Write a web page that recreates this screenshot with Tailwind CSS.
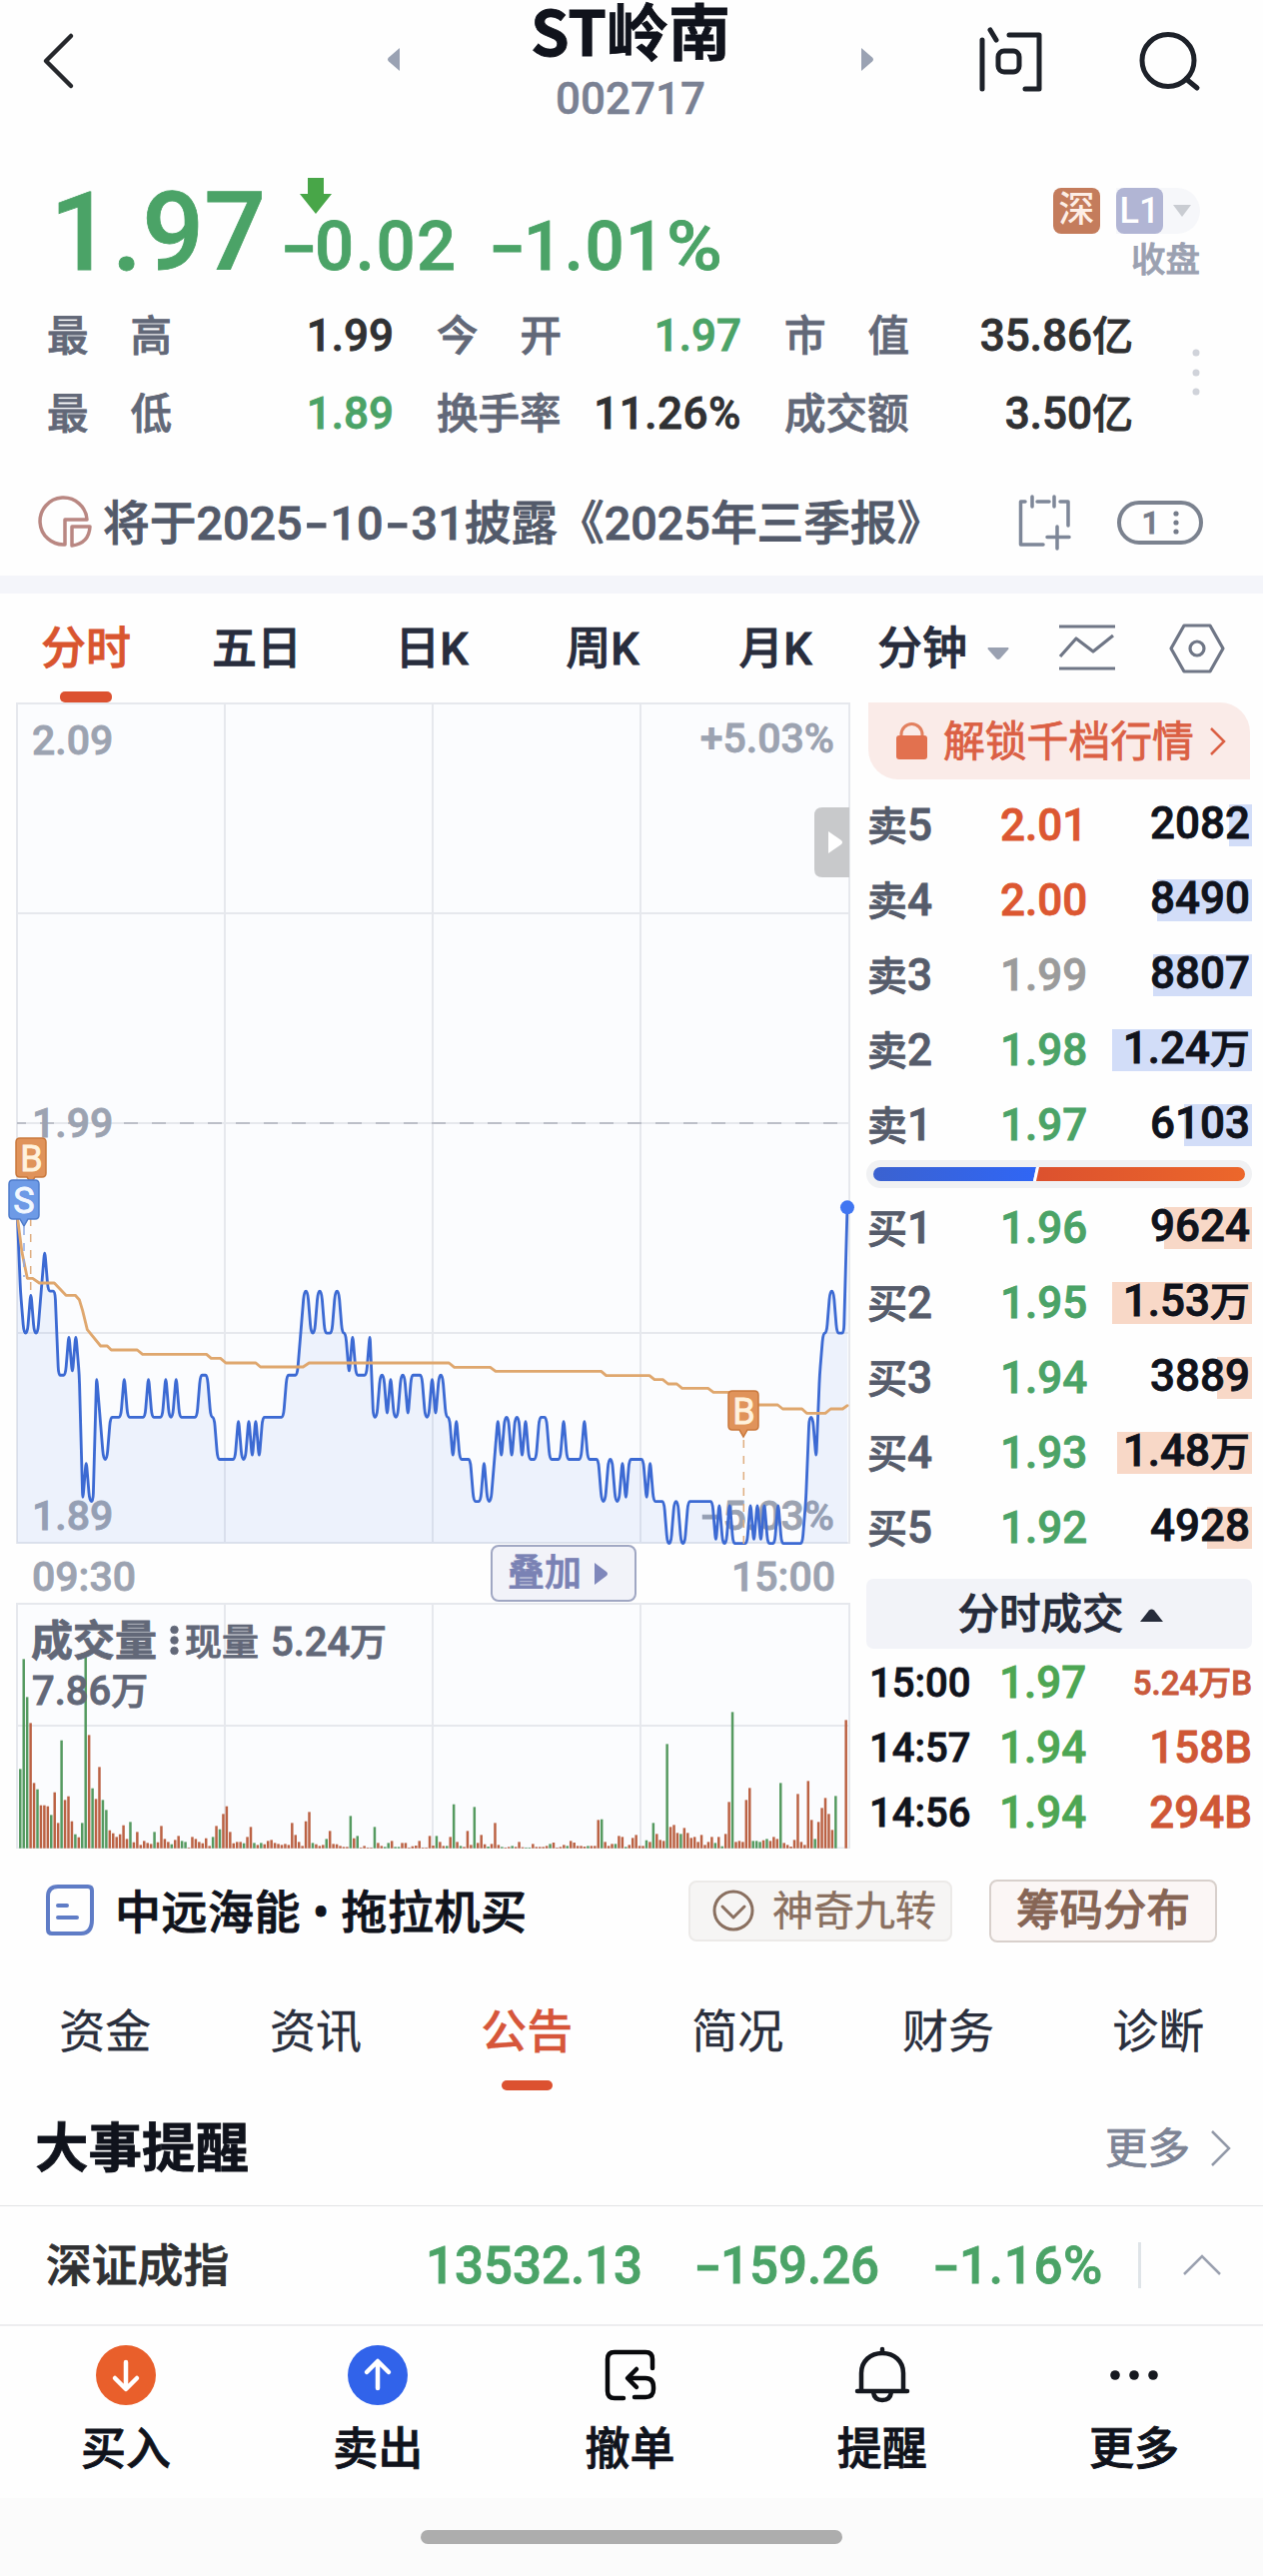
<!DOCTYPE html>
<html lang="zh-CN">
<head>
    <meta charset="UTF-8">
    <meta name="viewport" content="width=device-width, initial-scale=1.0">
    <title>ST岭南 002717</title>
    <script src="https://cdn.jsdelivr.net/npm/@tailwindcss/browser@4"></script>
</head>

<body class="w-[1264px] bg-[#fefefe] font-['Roboto','Noto_Sans_CJK_SC',sans-serif] font-medium text-[#10131c] leading-none overflow-x-hidden [-webkit-text-stroke-width:0.8px]">

  <!-- Header -->
  <header class="h-[150px] flex items-start">
    <svg class="ml-[40px] mt-[30px] w-[40px] h-[62px]" viewBox="0 0 40 62" fill="none" stroke="#26282c" stroke-width="4.5" stroke-linecap="round" stroke-linejoin="round"><path d="M31 6 6 31l25 25"/></svg>
    <svg class="ml-[308px] mt-[48px] w-[12px] h-[23px]" viewBox="0 0 12 23" fill="#9aa2b3"><path d="M12 0v23L1 13.5q-2-2 0-4z"/></svg>
    <div class="w-[462px] text-center">
      <h1 class="h-[60px] leading-[58px] text-[62px] font-bold font-['Noto_Sans_CJK_SC',sans-serif]">ST岭南</h1>
      <div class="mt-[17px] text-[44px] text-[#7a8193] [-webkit-text-stroke-width:0.4px]">002717</div>
    </div>
    <svg class="mt-[48px] w-[12px] h-[23px]" viewBox="0 0 12 23" fill="#9aa2b3"><path d="M0 0v23l11-9.500q2-2 0-4z"/></svg>
    <svg class="ml-[101px] mt-[24px] w-[72px] h-[72px]" viewBox="0 0 72 72" fill="none" stroke="#1d2129" stroke-width="5" stroke-linecap="round" stroke-linejoin="round">
      <path d="M8 16v49M16 6l6 10M35 11h30v54H51"/>
      <rect x="24" y="27" width="21" height="21" rx="6"/>
    </svg>
    <svg class="ml-[88px] mt-[28px] w-[70px] h-[68px]" viewBox="0 0 70 68" fill="none" stroke="#1d2129" stroke-width="5" stroke-linecap="round"><circle cx="34" cy="32.500" r="26"/><path d="m52 51 11 9"/></svg>
  </header>

  <!-- Price -->
  <section class="h-[147px] flex justify-between items-start">
    <div class="relative pt-[29px] pl-[50px] flex items-baseline text-[#4ba367]">
      <span class="w-[236px] text-[109px]">1.97</span>
      <span class="w-[208px] text-[69px] tracking-[1.500px] whitespace-nowrap"><span class="inline-block w-[29px] scale-x-150 text-center">-</span>0.02</span>
      <span class="text-[69px] tracking-[1.500px] whitespace-nowrap"><span class="inline-block w-[30px] scale-x-150 text-center">-</span>1.01<span class="inline-block scale-x-110 origin-left">%</span></span>
      <svg class="absolute left-[300px] top-[28px] w-[32px] h-[36px]" viewBox="0 0 32 36" fill="#48a648"><path d="M8 0h16v16h8L16 36 0 16h8z"/></svg>
    </div>
    <div class="mt-[38px] mr-[63px] flex flex-col items-end">
      <div class="flex items-center">
        <span class="w-[47px] h-[46px] leading-[45px] rounded-[8px] bg-[#c47c5c] text-center text-[36px] text-[#fdeee6] [-webkit-text-stroke-width:0px]">深</span>
        <span class="ml-[16px] flex items-center w-[84px] h-[46px] rounded-r-full rounded-l-[8px] bg-[#f6f7fa]">
          <span class="w-[47px] h-[46px] leading-[46px] rounded-[8px] bg-[#b1b5d4] text-center text-[36px] text-white [-webkit-text-stroke-width:0px]">L1</span>
          <svg class="ml-[10px] w-[18px] h-[12px]" viewBox="0 0 18 12" fill="#c9ccd2"><path d="M0 0h18L9 12z"/></svg>
        </span>
      </div>
      <span class="mt-[9px] text-[34.500px] text-[#9ba1b1]">收盘</span>
    </div>
  </section>

  <!-- Key figures -->
  <section class="relative h-[156px] pl-[47px] grid grid-cols-[347px_305px_349px] gap-x-[43px] grid-rows-2 text-[44px] text-[#303133] leading-[79px]">
    <div class="flex justify-between"><span class="w-[125px] flex justify-between text-[41.500px] text-[#626878]"><i class="not-italic">最</i><i class="not-italic">高</i></span><span>1.99</span></div>
    <div class="flex justify-between"><span class="w-[125px] flex justify-between text-[41.500px] text-[#626878]"><i class="not-italic">今</i><i class="not-italic">开</i></span><span class="text-[#4ba367]">1.97</span></div>
    <div class="flex justify-between"><span class="w-[125px] flex justify-between text-[41.500px] text-[#626878]"><i class="not-italic">市</i><i class="not-italic">值</i></span><span>35.86<b class="font-medium text-[41px]">亿</b></span></div>
    <div class="flex justify-between"><span class="w-[125px] flex justify-between text-[41.500px] text-[#626878]"><i class="not-italic">最</i><i class="not-italic">低</i></span><span class="text-[#4ba367]">1.89</span></div>
    <div class="flex justify-between"><span class="text-[41.500px] text-[#626878]">换手率</span><span class="tracking-[0.500px]">11.26%</span></div>
    <div class="flex justify-between"><span class="text-[41.500px] text-[#626878]">成交额</span><span>3.50<b class="font-medium text-[41px]">亿</b></span></div>
    <svg class="absolute left-[1193px] top-[52px] w-[8px] h-[48px]" viewBox="0 0 8 48" fill="#d0d3da"><circle cx="4" cy="4" r="3.500"/><circle cx="4" cy="24" r="3.500"/><circle cx="4" cy="43" r="3.500"/></svg>
  </section>

  <!-- Report notice -->
  <section class="mt-[17px] h-[106px] flex items-center">
    <svg class="ml-[38px] w-[56px] h-[56px]" viewBox="0 0 56 56" fill="none" stroke="#b98782" stroke-width="3.500" stroke-linejoin="round">
      <path d="M27 50A23.500 23.500 0 1 1 49 25H27z"/>
      <path d="M34 32h18q-1 17-18 19z"/>
    </svg>
    <p class="ml-[9px] pt-[2px] text-[46.700px] text-[#535a6a] whitespace-nowrap">将于2025<span class="inline-block w-[28px] scale-x-150 text-center">-</span>10<span class="inline-block w-[28px] scale-x-150 text-center">-</span>31披露《2025年三季报》</p>
    <svg class="absolute left-[1018px] w-[56px] h-[56px]" viewBox="0 0 56 56" fill="none" stroke="#7e8798" stroke-width="3.500" stroke-linecap="round" stroke-linejoin="round">
      <path d="M8 7H3.500v43H26M15 2v10M20 7h12M37 2v10M43 7h8v24M40 32v22M30 42.500h22"/>
    </svg>
    <div class="absolute left-[1118px] w-[86px] h-[44px] rounded-full border-[4px] border-[#7b828f] flex items-center justify-center gap-[13px] text-[32px] text-[#757c8a]">
      <span>1</span>
      <svg class="w-[6px] h-[24px]" viewBox="0 0 6 24" fill="#757c8a"><circle cx="3" cy="3" r="2.600"/><circle cx="3" cy="12" r="2.600"/><circle cx="3" cy="21" r="2.600"/></svg>
    </div>
  </section>

  <div class="h-[18px] bg-[#f4f5fa]"></div>

  <!-- Chart period tabs -->
  <nav class="h-[109px] flex text-[45px] leading-[111px] text-[#282d3d]">
    <div class="w-[172px] flex flex-col items-center text-[#d9552f]"><span class="h-[98px]">分时</span><i class="w-[52px] h-[11px] rounded-[5px] bg-[#dc5130]"></i></div>
    <span class="w-[170px] text-center">五日</span>
    <span class="w-[180px] text-center">日K</span>
    <span class="w-[162px] text-center">周K</span>
    <span class="w-[184px] text-center">月K</span>
    <span class="ml-[10px] w-[110px]">分钟</span>
    <svg class="mt-[54px] w-[22px] h-[12px]" viewBox="0 0 22 12" fill="#9aa1b1"><path d="M1 0h20q1 1 0 2l-8 9q-2 2-4 0L1 2q-1-1 0-2z"/></svg>
    <svg class="ml-[48px] mt-[30px] w-[60px] h-[48px]" viewBox="0 0 60 48" fill="none" stroke="#6f7686" stroke-width="3.200" stroke-linejoin="round"><path d="M2 3h56M2 45h56M3 33 19 15l17 13 20-16"/></svg>
    <svg class="ml-[52px] mt-[29px] w-[56px] h-[52px]" viewBox="0 0 56 52" fill="none" stroke="#6f7686" stroke-width="3.200" stroke-linejoin="round"><path d="M15 3h26l13 23-13 23H15L2 26z"/><circle cx="28" cy="26" r="7"/></svg>
  </nav>

  <main class="flex">
    <!-- Charts -->
    <div class="w-[867px]">
      <svg id="price-chart" class="block w-[867px] h-[842px] overflow-visible" viewBox="0 0 867 842">
        <rect x="17" y="1" width="833" height="841" fill="#fbfcfe"/>
        <path d="M16 1h835M17 211h833M17 421h833M17 631h833M17 841h833M17 1v841M225 1v841M433 1v841M641 1v841M850 1v841" stroke="#e6e8ed" stroke-width="2" fill="none"/>
        <path d="M17 421h833" stroke="#bcbfc8" stroke-width="2" stroke-dasharray="14 14" stroke-dashoffset="5"/>
        <g fill="#9ca3b1" stroke="#9ca3b1" stroke-width=".8" font-size="41">
          <text x="32" y="52">2.09</text>
          <text x="32" y="435">1.99</text>
          <text x="32" y="828">1.89</text>
          <text x="835" y="50" text-anchor="end">+5.03%</text>
          <text transform="translate(701 828) scale(1.500 1)">-</text>
          <text x="835" y="828" text-anchor="end">5.03%</text>
        </g>
        <g transform="translate(0 417) scale(.33333)" fill="none" stroke-linecap="round" stroke-linejoin="round">
          <path id="price-area" fill="#3b6de8" fill-opacity=".07"/>
          <path id="price-line" stroke="#3c6ad3" stroke-width="8.500"/>
          <polyline stroke="#dfa76e" stroke-width="8.500" points="53,300 66,400 82,478 98,478 118,492 163,492 198,529 226,529 238,542 248,575 262,632 302,681 322,681 334,693 412,693 428,706 620,706 634,718 662,718 678,732 768,732 782,744 910,744 928,732 1348,732 1364,745 1472,745 1488,757 1805,757 1820,770 1950,770 1965,782 1990,782 2006,795 2032,795 2048,808 2126,808 2142,820 2230,820 2276,858 2335,858 2350,870 2408,870 2422,883 2478,883 2494,870 2530,870 2544,860"/>
          <circle cx="2544" cy="265" r="21" fill="#4076f2"/>
        </g>
        <!-- trade markers -->
        <path d="M30.700 500v95M744.300 738v104" stroke="#dfae80" stroke-width="1.500" stroke-dasharray="8 8" fill="none"/>
        <path d="M24 525v50" stroke="#8eaae6" stroke-width="1.500" stroke-dasharray="8 8"/>
        <g stroke-width="1.500" font-size="36" text-anchor="middle" font-weight="400">
          <path d="M20 436h22q4 0 4 4v31q0 4-4 4h-7l-4 6-4-6h-7q-4 0-4-4v-31q0-4 4-4z" fill="#e0935a" stroke="#c9783c"/>
          <text x="31.500" y="469" fill="#fff2dc" stroke="#fff2dc" stroke-width=".8">B</text>
          <path d="M13 478h22q4 0 4 4v31q0 4-4 4h-7l-4 7-4-7h-7q-4 0-4-4v-31q0-4 4-4z" fill="#6d9ae6" stroke="#4f7ccb"/>
          <text x="24" y="511" fill="#f2f8ff" stroke="#f2f8ff" stroke-width=".8">S</text>
          <path d="M733 689h22q4 0 4 4v31q0 4-4 4h-7l-4 7-4-7h-7q-4 0-4-4v-31q0-4 4-4z" fill="#e0935a" stroke="#c9783c"/>
          <text x="744.500" y="722" fill="#fff2dc" stroke="#fff2dc" stroke-width=".8">B</text>
        </g>
        <path d="M850 105h-27q-8 0-8 8v54q0 8 8 8h27z" fill="#c8c9cb"/>
        <path d="M829 129v22l13-9q2-2 0-4z" fill="#fff"/>
      </svg>
      <div class="h-[59px] pl-[32px] pr-[31px] flex items-center text-[41px] text-[#9ca3b1]">
        <span class="w-[459px] pt-[8px]">09:30</span>
        <span class="w-[146px] h-[57px] pl-[15px] flex items-center gap-[13px] rounded-[8px] border-2 border-[#a0a7c3] bg-[#f2f3f9] text-[37px] text-[#7a82b4]">叠加
          <svg class="w-[13px] h-[22px]" viewBox="0 0 13 22" fill="#7f87bb"><path d="M0 0v22l12-9q2-2 0-4z"/></svg>
        </span>
        <span class="ml-auto pt-[8px]">15:00</span>
      </div>
      <svg id="volume-chart" class="block w-[867px] h-[246px]" viewBox="0 0 867 246">
        <rect x="17" y="1" width="833" height="245" fill="#fbfcfe"/>
        <path d="M16 1h835M17 123h833M17 245.500h833M17 1v245M225 1v245M433 1v245M641 1v245M850 1v245" stroke="#e6e8ed" stroke-width="2" fill="none"/>
        <g id="volume-bars"></g>
        <g fill="#626878" stroke="#626878" stroke-width=".8">
          <text x="31" y="53" font-size="42" font-weight="700">成交量</text>
          <circle cx="174.500" cy="27" r="3.800"/><circle cx="174.500" cy="37.500" r="3.800"/><circle cx="174.500" cy="48" r="3.800"/>
          <text x="185" y="53" font-size="37">现量 <tspan font-size="40" x="271">5.24</tspan><tspan x="350">万</tspan></text>
          <text x="32" y="102" font-size="40">7.86<tspan font-size="37">万</tspan></text>
        </g>
      </svg>
    </div>

    <!-- Order book -->
    <aside class="w-[386px] text-[44px]">
      <div class="ml-[2px] w-[382px] h-[77px] pl-[28px] flex items-center rounded-tr-[30px] rounded-bl-[30px] bg-[#faebe8] text-[#db6044]">
        <svg class="w-[31px] h-[38px]" viewBox="0 0 31 38"><path d="M5 16v-4a10.500 10.500 0 0 1 21 0v4" fill="none" stroke="#e2805f" stroke-width="3"/><rect y="13" width="31" height="24" rx="3" fill="#e2714f"/></svg>
        <span class="ml-[16px] pt-[2px] text-[41.800px] font-normal">解锁千档行情</span>
        <svg class="ml-[15px] w-[18px] h-[30px]" viewBox="0 0 18 30" fill="none" stroke="#db6044" stroke-width="2.500"><path d="m2 2 13 13L2 28"/></svg>
      </div>
      <div id="asks" class="mt-[25px] flex flex-col gap-[33px]"></div>
      <div class="mt-[14px] h-[28px] px-[7px] flex items-center rounded-full bg-[#f0f1f3]">
        <svg class="w-[372px] h-[14px]" viewBox="0 0 372 14">
          <defs>
            <linearGradient id="sell"><stop offset="0" stop-color="#3b62d0"/><stop offset="1" stop-color="#3066f5"/></linearGradient>
            <linearGradient id="buy"><stop offset="0" stop-color="#dc512e"/><stop offset="1" stop-color="#ec672b"/></linearGradient>
          </defs>
          <path d="M7 0h156l-3 14H7A7 7 0 0 1 7 0z" fill="url(#sell)"/>
          <path d="M163 0h3l-3 14h-3z" fill="#fff"/>
          <path d="M166 0h199a7 7 0 0 1 0 14H163z" fill="url(#buy)"/>
        </svg>
      </div>
      <div id="bids" class="mt-[19px] flex flex-col gap-[33px]"></div>

      <div class="mt-[30px] h-[70px] pt-[2px] pl-[2px] flex items-center justify-center gap-[16px] rounded-[7px] bg-[#f2f3f8] text-[41.500px] text-[#272c3b]">分时成交
        <svg class="w-[23px] h-[13px]" viewBox="0 0 23 13" fill="#272c3b"><path d="M0 13h23L14 1.500q-2.500-2-5 0z"/></svg>
      </div>
      <div class="pt-[2px] pl-[3px] leading-[65px] text-[#4da653]">
        <div class="h-[65px] flex"><span class="w-[130px] text-[40px] text-[#10131c]">15:00</span><span>1.97</span><span class="ml-auto text-[33px] text-[#c95a3c]">5.24万B</span></div>
        <div class="h-[65px] flex"><span class="w-[130px] text-[40px] text-[#10131c]">14:57</span><span>1.94</span><span class="ml-auto text-[#cf5736]">158B</span></div>
        <div class="h-[65px] flex"><span class="w-[130px] text-[40px] text-[#10131c]">14:56</span><span>1.94</span><span class="ml-auto text-[#cf5736]">294B</span></div>
      </div>
    </aside>
  </main>

  <!-- Notice strip -->
  <section class="h-[124px] flex items-center">
    <svg class="ml-[45px] w-[50px] h-[54px]" viewBox="0 0 50 54" fill="none" stroke="#5f7cc6" stroke-width="4" stroke-linecap="round" stroke-linejoin="round"><path d="M13 3h30q4 0 4 4v29q0 14-11 14H7q-4 0-4-4V13Q3 3 13 3zM13 22h9M13 34h19"/></svg>
    <p class="ml-[20px] w-[574px] pt-[3px] text-[46px] tracking-[0.500px] whitespace-nowrap">中远海能 • 拖拉机买</p>
    <div class="w-[264px] h-[61px] pl-[22px] flex items-center gap-[18px] rounded-[8px] border-2 border-[#eceae8] bg-[#f6f5f4] text-[41px] font-normal text-[#8a7060] [-webkit-text-stroke-width:0.4px]">
      <svg class="w-[42px] h-[42px]" viewBox="0 0 42 42" fill="none" stroke="#8a7060" stroke-width="3" stroke-linecap="round" stroke-linejoin="round"><circle cx="21" cy="21" r="19"/><path d="m10 17 11 11 11-11"/></svg><span class="pt-[2px]">神奇九转</span>
    </div>
    <div class="ml-[37px] w-[228px] h-[63px] pt-[2px] flex items-center justify-center rounded-[8px] border-2 border-[#d8d0cc] bg-[#fbf6f5] text-[43.500px] text-[#866555]">筹码分布</div>
  </section>

  <!-- Content tabs -->
  <nav class="h-[118px] flex text-[46px] leading-[119px] font-normal text-[#2a2f3d] [-webkit-text-stroke-width:0.3px]">
    <span class="w-[211px] text-center">资金</span>
    <span class="w-[211px] text-center">资讯</span>
    <div class="w-[212px] flex flex-col items-center font-medium text-[#d6563a]"><span class="h-[108px]">公告</span><i class="w-[51px] h-[10px] rounded-[5px] bg-[#dc5130]"></i></div>
    <span class="w-[211px] text-center">简况</span>
    <span class="w-[211px] text-center">财务</span>
    <span class="w-[210px] text-center">诊断</span>
  </nav>

  <section class="h-[115px] pl-[35px] pr-[32px] flex items-center">
    <h2 class="pt-[3px] text-[53.500px] font-bold">大事提醒</h2>
    <span class="ml-auto pt-[3px] text-[42.500px] font-normal text-[#7d8495]">更多</span>
    <svg class="ml-[20px] w-[21px] h-[36px]" viewBox="0 0 21 36" fill="none" stroke="#9299a8" stroke-width="2.500"><path d="m2 1 17 17L2 35"/></svg>
  </section>

  <!-- Index ticker -->
  <section class="h-[119px] flex items-center border-t border-[#e2e3e5] text-[51px] text-[#4ba367] whitespace-nowrap">
    <span class="ml-[46px] w-[380px] pt-[3px] text-[45.800px] text-[#303133]">深证成指</span>
    <span class="w-[270px]">13532.13</span>
    <span class="w-[239px]"><span class="inline-block w-[25px] scale-x-150 text-center">-</span>159.26</span>
    <span class="w-[204px] tracking-[0.800px]"><span class="inline-block w-[25px] scale-x-150 text-center">-</span>1.16<span class="inline-block scale-x-105 origin-left">%</span></span>
    <i class="w-[3px] h-[46px] bg-[#dfe4e8]"></i>
    <svg class="ml-[42px] w-[38px] h-[22px]" viewBox="0 0 38 22" fill="none" stroke="#9ba1b0" stroke-width="2.500"><path d="M1 20 19 2l18 18"/></svg>
  </section>

  <!-- Action bar -->
  <nav class="h-[174px] pt-[19px] pr-[3px] grid grid-cols-5 border-t-2 border-[#ededef] text-[45px]">
    <div class="flex flex-col items-center gap-[22px]">
      <svg class="w-[60px] h-[60px]" viewBox="0 0 60 60" fill="none" stroke="#fff" stroke-width="4.500" stroke-linecap="round" stroke-linejoin="round"><circle cx="30" cy="30" r="30" fill="#e95f2b" stroke="none"/><path d="M30 17v26M19 33l11 11 11-11"/></svg>
      <span>买入</span>
    </div>
    <div class="flex flex-col items-center gap-[22px]">
      <svg class="w-[60px] h-[60px]" viewBox="0 0 60 60" fill="none" stroke="#fff" stroke-width="4.500" stroke-linecap="round" stroke-linejoin="round"><circle cx="30" cy="30" r="30" fill="#3163ea" stroke="none"/><path d="M30 43V17M19 27l11-11 11 11"/></svg>
      <span>卖出</span>
    </div>
    <div class="flex flex-col items-center gap-[22px]">
      <svg class="w-[60px] h-[60px]" viewBox="0 0 60 60" fill="none" stroke="#08090c" stroke-width="4.500" stroke-linecap="round" stroke-linejoin="round"><path d="M24 53h-9q-7 0-7-7V14q0-7 7-7h31q7 0 7 7v9M37 24l-9 9 9 9M29 33h17q8 0 8 9v2q0 8-8 8H35"/></svg>
      <span>撤单</span>
    </div>
    <div class="flex flex-col items-center gap-[22px]">
      <svg class="w-[60px] h-[60px]" viewBox="0 0 60 60" fill="none" stroke="#15181f" stroke-width="4.500" stroke-linecap="round" stroke-linejoin="round"><path d="M30 4v3M9 46V28C9 16 18 8 30 8s21 8 21 20v18M5 46h50M21 47q1 8 9 8t9-8"/></svg>
      <span>提醒</span>
    </div>
    <div class="flex flex-col items-center gap-[22px]">
      <svg class="w-[60px] h-[60px]" viewBox="0 0 60 60" fill="#15181f"><circle cx="11" cy="30" r="4.800"/><circle cx="30" cy="30" r="4.800"/><circle cx="49" cy="30" r="4.800"/></svg>
      <span>更多</span>
    </div>
  </nav>

  <footer class="h-[78px] flex items-center justify-center bg-[#fbfbfb]"><i class="w-[422px] h-[14px] rounded-full bg-[#adadad]"></i></footer>

</body>
<script>
// label, price, price colour, volume, bar width in px
const asks = [
  ['卖5', '2.01', 'text-[#dc5731]', '2082', 23],
  ['卖4', '2.00', 'text-[#dc5731]', '8490', 95],
  ['卖3', '1.99', 'text-[#9b9b9b]', '8807', 99],
  ['卖2', '1.98', 'text-[#4ba367]', '1.24万', 140],
  ['卖1', '1.97', 'text-[#4ba367]', '6103', 68]
];
const bids = [
  ['买1', '1.96', 'text-[#4ba367]', '9624', 88],
  ['买2', '1.95', 'text-[#4ba367]', '1.53万', 140],
  ['买3', '1.94', 'text-[#4ba367]', '3889', 35],
  ['买4', '1.93', 'text-[#4ba367]', '1.48万', 135],
  ['买5', '1.92', 'text-[#4ba367]', '4928', 45]
];

function renderBook(id, rows, barColor) {
  document.getElementById(id).innerHTML = rows.map(([label, price, color, volume, width]) => `
    <div class="relative h-[42px] leading-[43px] pl-[1px] pr-[2px] flex">
      <i class="absolute right-0 top-0 h-[42px] ${barColor}" style="width:${width}px"></i>
      <span class="w-[133px] text-[#565c6b]"><b class="font-medium text-[40px]">${label[0]}</b>${label[1]}</span>
      <span class="${color}">${price}</span>
      <span class="relative -top-[2px] ml-auto">${volume.replace('万', '<b class="font-medium text-[40px]">万</b>')}</span>
    </div>`).join('');
}
renderBook('asks', asks, 'bg-[#d2ddf8]');
renderBook('bids', bids, 'bg-[#f8d8c7]');

// one digit per minute: cents above 1.89
const ticks = ('865565567666444545412114322333343333334333343343333334443322222232232323333333444456655' +
  '6655566554544445334434334434444334344332322221112112323323323222333222232222232222' +
  '11221121222221211110011001111111101001000001010100010000000133245566' + '5558').split('').map(Number);
const pts = ticks.map((t, i) => [51 + i * 2493 / (ticks.length - 1), 1274 - t * 126.3]);

// polyline with rounded corners
function roundedPath(p, r) {
  let d = `M${p[0]}`;
  for (let i = 1; i < p.length - 1; i++) {
    const [a, b, c] = [p[i - 1], p[i], p[i + 1]];
    const l1 = Math.hypot(a[0] - b[0], a[1] - b[1]);
    const l2 = Math.hypot(c[0] - b[0], c[1] - b[1]);
    const k1 = Math.min(r, l1 / 2) / l1;
    const k2 = Math.min(r, l2 / 2) / l2;
    d += `L${b[0] + (a[0] - b[0]) * k1},${b[1] + (a[1] - b[1]) * k1}`;
    d += `Q${b},${b[0] + (c[0] - b[0]) * k2},${b[1] + (c[1] - b[1]) * k2}`;
  }
  return d + `L${p[p.length - 1]}`;
}
const line = roundedPath(pts, 26);
document.getElementById('price-line').setAttribute('d', line);
document.getElementById('price-area').setAttribute('d', line + 'V1274H51Z');

// volume per minute, g marks a falling minute
const volumes = `238g 568g 454g 376 196 177g 129 129 126 100g 168 76 324g 145 156 81 42g 33 76g 574g
  340 180g 148 244 145g 115g 54 45 34 42 69 28 79g 18 49 10 22 16 13 49g
  18 67 28 19 12g 25 37 22g 19g 2 34 28 19 15 30 7 34g 67 57g 103
  126 49 15 19 19 15g 34 64 16g 10 16g 12 22 25 16 13 10 13 10 76
  40 19 7 81 109 16g 12 7 10 28g 52 13 12 7 4 4 97g 30 37g 2
  7 2 2 64g 16 7 4g 16g 22 4g 4g 16 16 2 6 8 22 2 2 37
  8 37g 19 7 7g 34 132g 19 7g 4 52 10 124g 16 40 12 5g 13 76 10
  4g 2 4 7g 4 19 3 2g 2g 13 4 4 4 7 13g 17 2 4 10 7g
  22 17 7 7 5 7g 7 7 85 87g 19 7 13 13g 37 34 4g 10 31 40
  7 7 24g 19 76g 43 25 22 313g 64 70 46 43g 61 46 31 34 19 40 10
  19 34 16g 34 6g 43 139 409g 19 22 19 145 181 22g 22g 19g 24 28g 22 34
  28 196g 16 10 5 25 163 19 10 202 85 28g 79 121 151 103 55 157g 0 0
  385`.trim().split(/\s+/);
document.getElementById('volume-bars').innerHTML = volumes.map((v, i) => {
  const h = parseInt(v) / 3;
  const x = (61 + i * 10.33) / 3 - 1.3;
  return `<rect x="${x}" y="${245.7 - h}" width="2.5" height="${h}" fill="${v.endsWith('g') ? '#559a60' : '#bb6244'}"/>`;
}).join('');
</script>
</html>
